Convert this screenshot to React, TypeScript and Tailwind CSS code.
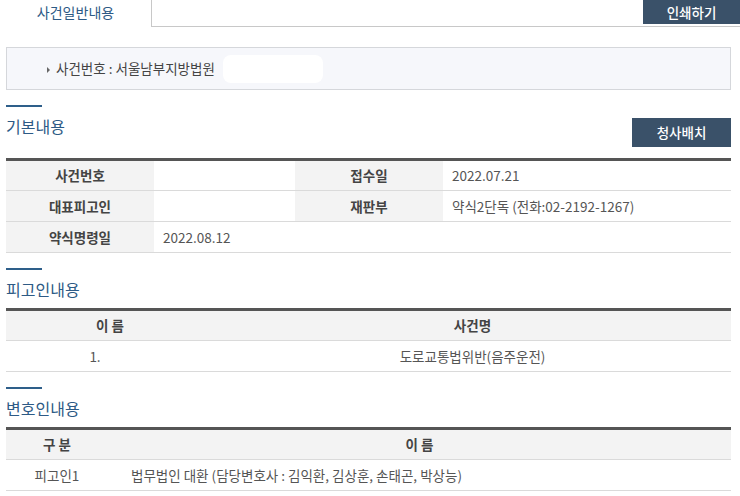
const font = { fontFamily: '"Noto Sans CJK KR", "Noto Sans", sans-serif' };

function SectionTitle({ title }: { title: string }) {
  return (
    <div>
      <div className="h-[2px] w-9 bg-[#2e5f8a]" />
      <h2 className="mt-[7px] text-[16px] leading-6 text-[#2d5a85]">{title}</h2>
    </div>
  );
}

const th = 'bg-[#f3f3f3] text-center font-bold text-[#444]';
const td = 'px-[9px] text-[#555]';

export default function App() {
  return (
    <div className="min-h-[496px] bg-white text-[13.5px]" style={font}>
      {/* Tabs */}
      <div className="flex h-[27px]">
        <div className="flex w-[151px] items-center justify-center pb-[2px] text-[14px] text-[#2d5a85]">
          사건일반내용
        </div>
        <div className="flex flex-1 justify-end border-b border-l border-[#c8c8c8]">
          <button className="h-[24px] w-[97px] bg-[#3a5169] text-[13.5px] font-medium text-white">인쇄하기</button>
        </div>
      </div>

      <div className="pl-[6px] pr-[9px]">
        {/* Summary box */}
        <div className="mt-5 flex h-[43px] items-center border border-[#d5d7db] bg-[#f6f7fb] pl-10">
          <span className="mr-[6px] mt-[2px] h-0 w-0 border-y-[3px] border-l-[3px] border-y-transparent border-l-[#666]" />
          <span className="text-[#444]">사건번호 : 서울남부지방법원</span>
          <span className="ml-2 h-[28px] w-[100px] rounded-lg bg-white" />
        </div>

        {/* 기본내용 */}
        <div className="mt-[15px] flex h-[42px] justify-between">
          <SectionTitle title="기본내용" />
          <button className="h-[29px] w-[99px] self-end bg-[#3a5169] text-[13.5px] font-medium text-white">청사배치</button>
        </div>
        <table className="mt-[11px] w-full border-collapse border-t-[3px] border-[#555]">
          <colgroup>
            <col className="w-[148px]" />
            <col className="w-[141px]" />
            <col className="w-[148px]" />
            <col />
          </colgroup>
          <tbody>
            <tr className="h-[31px] border-b border-[#dadada]">
              <th className={th}>사건번호</th>
              <td className={td}></td>
              <th className={th}>접수일</th>
              <td className={td}>2022.07.21</td>
            </tr>
            <tr className="h-[31px] border-b border-[#dadada]">
              <th className={th}>대표피고인</th>
              <td className={td}></td>
              <th className={th}>재판부</th>
              <td className={td}>약식2단독 (전화:02-2192-1267)</td>
            </tr>
            <tr className="h-[31px] border-b border-[#dadada]">
              <th className={th}>약식명령일</th>
              <td className={td} colSpan={3}>2022.08.12</td>
            </tr>
          </tbody>
        </table>

        {/* 피고인내용 */}
        <div className="mt-[15px] mb-[7px]">
          <SectionTitle title="피고인내용" />
        </div>
        <table className="w-full border-collapse border-t-[3px] border-[#555]">
          <colgroup>
            <col className="w-[208px]" />
            <col />
          </colgroup>
          <thead>
            <tr className="h-[31px] border-b border-[#dadada]">
              <th className={th}>이 름</th>
              <th className={th}>사건명</th>
            </tr>
          </thead>
          <tbody>
            <tr className="h-[31px] border-b border-[#dadada]">
              <td className="pr-[30px] text-center text-[#555]">1.</td>
              <td className="text-center text-[#555]">도로교통법위반(음주운전)</td>
            </tr>
          </tbody>
        </table>

        {/* 변호인내용 */}
        <div className="mt-[15px] mb-[7px]">
          <SectionTitle title="변호인내용" />
        </div>
        <table className="w-full border-collapse border-t-[3px] border-[#555]">
          <colgroup>
            <col className="w-[102px]" />
            <col />
          </colgroup>
          <thead>
            <tr className="h-[31px] border-b border-[#dadada]">
              <th className={th}>구 분</th>
              <th className={th}>이 름</th>
            </tr>
          </thead>
          <tbody>
            <tr className="h-[31px] border-b border-[#dadada]">
              <td className="text-center text-[#555]">피고인1</td>
              <td className="pl-[23px] text-[#555]">법무법인 대환 (담당변호사 : 김익환, 김상훈, 손태곤, 박상능)</td>
            </tr>
          </tbody>
        </table>
      </div>
    </div>
  );
}
